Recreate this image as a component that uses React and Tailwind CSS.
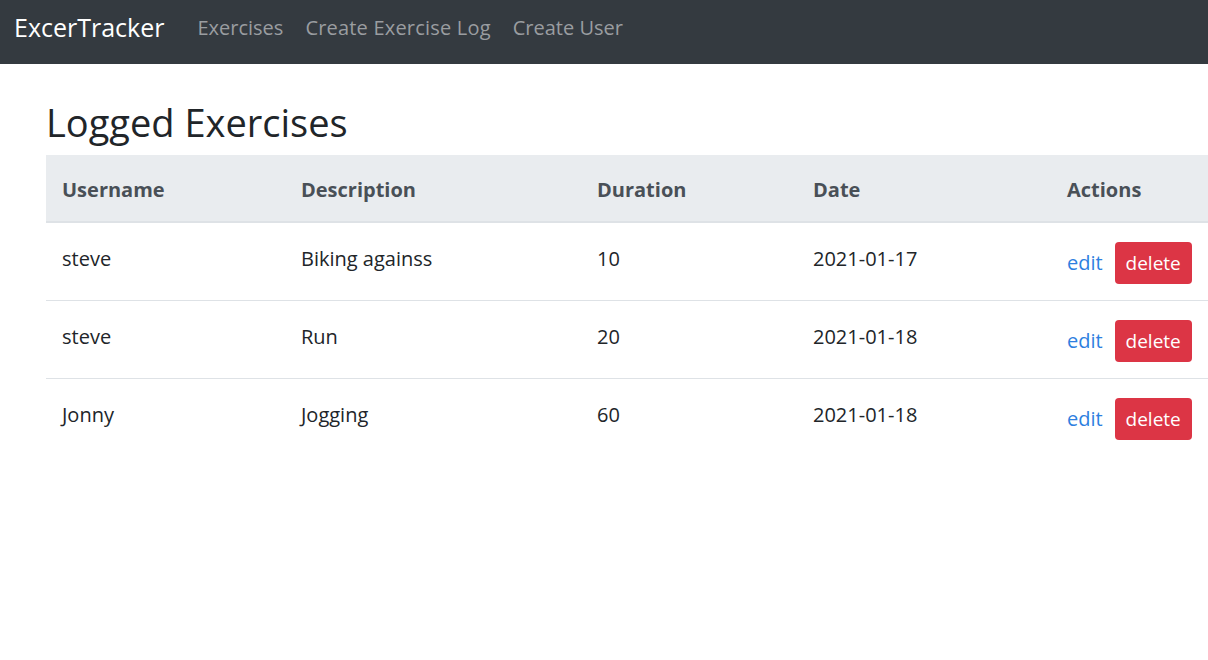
import React from 'react';

const exercises = [
  { id: 1, username: 'steve', description: 'Biking againss', duration: 10, date: '2021-01-17' },
  { id: 2, username: 'steve', description: 'Run', duration: 20, date: '2021-01-18' },
  { id: 3, username: 'Jonny', description: 'Jogging', duration: 60, date: '2021-01-18' },
];

const Navbar = () => (
  <nav className="h-[64px] bg-[#343a40] flex items-start pl-[14px]">
    <span className="text-white text-[25px] leading-[36px] mt-[9px] mr-[22px]">ExcerTracker</span>
    <a className="text-[#9a9da0] text-[20px] leading-[30px] mt-[13px] px-[11px]">Exercises</a>
    <a className="text-[#9a9da0] text-[20px] leading-[30px] mt-[13px] px-[11px] tracking-[0.2px]">Create Exercise Log</a>
    <a className="text-[#9a9da0] text-[20px] leading-[30px] mt-[13px] px-[11px]">Create User</a>
  </nav>
);

const ExercisesList = () => (
  <div className="pl-[46px]">
    <h3 className="text-[38px] leading-[46px] mt-[35px] mb-[10px] text-[#212529] font-normal">Logged Exercises</h3>
    <table className="w-[1162px] table-fixed border-collapse text-[20px] leading-[30px] text-[#212529]">
      <thead className="bg-[#e9ecef]">
        <tr className="border-b-2 border-[#dee2e6]">
          <th className="w-[239px] pl-[16px] pt-[20px] pb-[16px] text-left font-bold text-[#495057]">Username</th>
          <th className="w-[296px] pl-[16px] pt-[20px] pb-[16px] text-left font-bold text-[#495057]">Description</th>
          <th className="w-[216px] pl-[16px] pt-[20px] pb-[16px] text-left font-bold text-[#495057]">Duration</th>
          <th className="w-[254px] pl-[16px] pt-[20px] pb-[16px] text-left font-bold text-[#495057]">Date</th>
          <th className="pl-[16px] pt-[20px] pb-[16px] text-left font-bold text-[#495057]">Actions</th>
        </tr>
      </thead>
      <tbody>
        {exercises.map((ex, i) => (
          <tr key={ex.id} className={i < exercises.length - 1 ? 'border-b border-[#dee2e6]' : ''}>
            <td className="pl-[16px] pt-[21px] align-top">{ex.username}</td>
            <td className="pl-[16px] pt-[21px] align-top">{ex.description}</td>
            <td className="pl-[16px] pt-[21px] align-top">{ex.duration}</td>
            <td className="pl-[16px] pt-[21px] align-top">{ex.date}</td>
            <td className="pl-[16px] pt-[19px] pb-[16px] align-top">
              <div className="flex items-center">
                <a className="text-[#2e7fe0] mr-[12px]">edit</a>
                <button className="h-[42px] w-[77px] bg-[#dc3545] text-white rounded-[4px] text-[19px] leading-[42px]">
                  delete
                </button>
              </div>
            </td>
          </tr>
        ))}
      </tbody>
    </table>
  </div>
);

export default function App() {
  return (
    <div className="w-[1208px] h-[660px] overflow-hidden bg-white" style={{ fontFamily: '"Open Sans", "Noto Sans", sans-serif' }}>
      <Navbar />
      <ExercisesList />
    </div>
  );
}
